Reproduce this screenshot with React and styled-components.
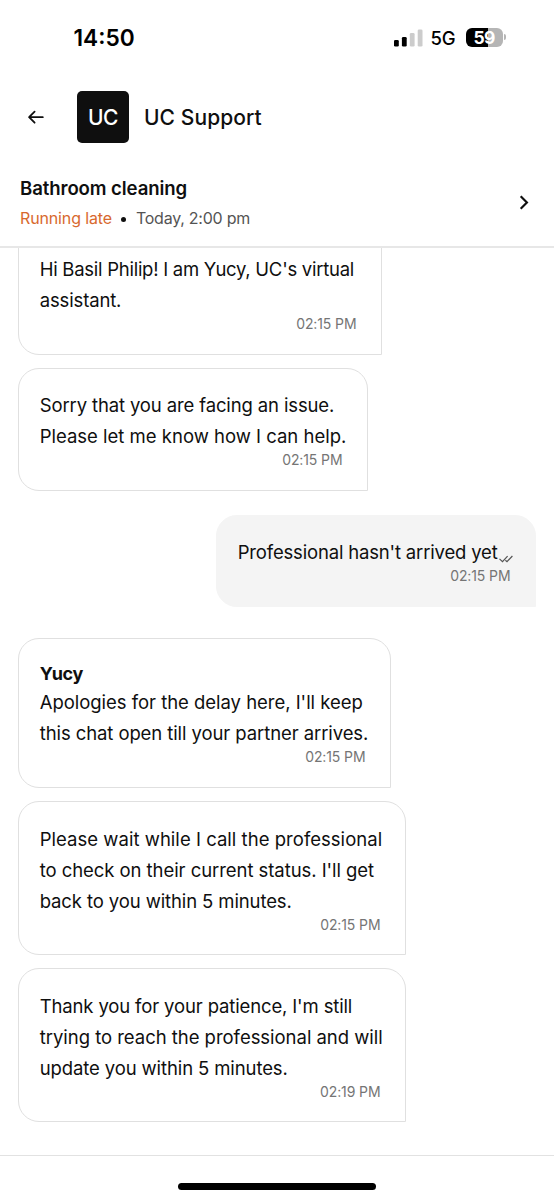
import React from 'react';
import styled, { createGlobalStyle } from 'styled-components';

const GlobalStyle = createGlobalStyle`
  *, *::before, *::after { box-sizing: border-box; }
  body { margin: 0; background: #fff; }
`;

const Screen = styled.main`
  width: 554px;
  height: 1200px;
  display: flex;
  flex-direction: column;
  overflow: hidden;
  background: #fff;
  color: #0f0f0f;
  font-family: Inter, 'Liberation Sans', sans-serif;
  white-space: nowrap;
`;

const StatusBar = styled.div`
  height: 76px;
  flex: none;
  display: flex;
  align-items: center;
  justify-content: space-between;
  padding: 0 51.5px 0 73.5px;
  color: #000;
`;

const Clock = styled.span`
  font-size: 22.7px;
  font-weight: 600;
  line-height: 28px;
`;

const StatusIcons = styled.div`
  display: flex;
  align-items: center;
`;

const Network = styled.span`
  width: 35px;
  margin-left: 8px;
  font-size: 18.5px;
  font-weight: 450;
  line-height: 24px;
  letter-spacing: -0.2px;
`;

const Battery = styled.div`
  position: relative;
  width: 37px;
  height: 19px;
  margin-bottom: 2px;
  border-radius: 6px;
  background: linear-gradient(90deg, #000 59%, #b5b5b5 59%);
  color: #fff;
  font-size: 17.5px;
  font-weight: 700;
  line-height: 20px;
  text-align: center;
  letter-spacing: -0.8px;

  &::after {
    content: '';
    position: absolute;
    right: -3px;
    top: 6.5px;
    width: 2px;
    height: 6px;
    border-radius: 0 2px 2px 0;
    background: #b5b5b5;
  }
`;

const TitleBar = styled.header`
  height: 82px;
  flex: none;
  display: flex;
  align-items: center;
  padding: 0 20px 0 27px;
`;

const BackIcon = styled.svg`
  width: 18px;
  height: 16px;
  flex: none;
`;

const Logo = styled.div`
  width: 52px;
  height: 52px;
  margin: 0 15px 0 32px;
  display: grid;
  place-items: center;
  border-radius: 5px;
  background: #0f0f0f;
  color: #fff;
  font-size: 21px;
  font-weight: 500;
  letter-spacing: -0.5px;
`;

const Title = styled.h1`
  margin: 0;
  font-size: 21px;
  font-weight: 500;
  letter-spacing: 0.08px;
`;

const Booking = styled.section`
  height: 90px;
  flex: none;
  display: flex;
  align-items: flex-start;
  justify-content: space-between;
  padding: 15.5px 25px 0 20px;
  border-bottom: 2px solid #e7e7e7;
`;

const Service = styled.h2`
  margin: 0 0 4px;
  font-size: 18.6px;
  font-weight: 600;
  line-height: 28px;
  letter-spacing: -0.1px;
`;

const Details = styled.div`
  display: flex;
  align-items: center;
  font-size: 16px;
  line-height: 25px;
  letter-spacing: -0.14px;
  color: #545454;
`;

const Late = styled.span`
  color: #d8692e;
`;

const Today = styled.span`
  letter-spacing: -0.24px;
`;

const Dot = styled.i`
  width: 5px;
  height: 5px;
  margin: 3px 10px 0 9px;
  border-radius: 50%;
  background: #0f0f0f;
`;

const Chevron = styled.svg`
  width: 10px;
  height: 15px;
  margin-top: 21px;
`;

const Chat = styled.div`
  flex: 1;
  min-height: 0;
  overflow: hidden;
  display: flex;
  flex-direction: column;
  justify-content: flex-end;
  padding: 0 18px 33px;
  border-bottom: 1px solid #e2e2e2;
`;

const Bubble = styled.article`
  flex: none;
  width: ${(p) => p.$width}px;
  align-self: ${(p) => (p.$own ? 'flex-end' : 'flex-start')};
  margin-top: ${(p) => p.$gap}px;
  padding: ${(p) => p.$top}px 24.5px 21.5px 20.7px;
  border: 1px solid ${(p) => (p.$own ? '#f4f4f4' : '#e0e0e0')};
  border-radius: 21px 21px 0 21px;
  background: ${(p) => (p.$own ? '#f4f4f4' : '#fff')};
`;

const Sender = styled.div`
  font-size: 18px;
  font-weight: 700;
  line-height: 27px;
  letter-spacing: -0.4px;
`;

const Line = styled.div`
  height: 31px;
  font-size: 18.5px;
  line-height: 31px;
  letter-spacing: ${(p) => p.$track}px;
`;

const Time = styled.time`
  display: block;
  font-size: 14px;
  line-height: 16px;
  letter-spacing: -0.1px;
  text-align: right;
  color: #757575;
`;

const Ticks = styled.svg`
  width: 14px;
  height: 8px;
  margin-left: 1px;
  vertical-align: -4px;
`;

const HomeArea = styled.footer`
  height: 44px;
  flex: none;
  display: flex;
  justify-content: center;
  align-items: flex-start;
  padding-top: 27px;
`;

const HomeIndicator = styled.div`
  width: 198px;
  height: 6.5px;
  border-radius: 3.5px;
  background: #000;
`;

const messages = [
  { width: 364, gap: 0, top: 60, time: '02:15 PM', lines: [["Hi Basil Philip! I am Yucy, UC's virtual", -0.26], ['assistant.', -0.14]] },
  { width: 350, gap: 13, top: 21.5, time: '02:15 PM', lines: [['Sorry that you are facing an issue.', -0.13], ['Please let me know how I can help.', 0]] },
  { width: 320, gap: 24, top: 21.5, time: '02:15 PM', own: true, lines: [["Professional hasn't arrived yet", -0.17]] },
  { width: 373, gap: 31.5, top: 21, time: '02:15 PM', sender: 'Yucy', lines: [["Apologies for the delay here, I'll keep", -0.03], ['this chat open till your partner arrives.', -0.09]] },
  { width: 388, gap: 13.5, top: 21.5, time: '02:15 PM', lines: [['Please wait while I call the professional', 0.03], ["to check on their current status. I'll get", -0.06], ['back to you within 5 minutes.', -0.11]] },
  { width: 388, gap: 13, top: 21.5, time: '02:19 PM', lines: [["Thank you for your patience, I'm still", -0.14], ['trying to reach the professional and will', -0.03], ['update you within 5 minutes.', -0.11]] },
];

const Signal = () => (
  <svg width="29" height="18" viewBox="0 0 29 18">
    <rect x="0" y="11" width="4.8" height="6.6" rx="1.3" fill="#000" />
    <rect x="7.9" y="8" width="4.8" height="9.6" rx="1.3" fill="#000" />
    <rect x="15.8" y="4" width="4.8" height="13.6" rx="1.3" fill="#ccc" />
    <rect x="23.7" y="0.4" width="4.8" height="17.2" rx="1.3" fill="#ccc" />
  </svg>
);

const ReadTicks = () => (
  <Ticks viewBox="0 0 14 8" fill="none" stroke="#545454" strokeWidth="1.2">
    <path d="M0.5 3.9 3.5 6.6 8.6 1.2M6.4 5.2 8 6.6 13.4 1" />
  </Ticks>
);

export default function App() {
  return (
    <Screen>
      <GlobalStyle />
      <StatusBar>
        <Clock>14:50</Clock>
        <StatusIcons>
          <Signal />
          <Network>5G</Network>
          <Battery>59</Battery>
        </StatusIcons>
      </StatusBar>
      <TitleBar>
        <BackIcon viewBox="0 0 18 16" fill="none" stroke="#0f0f0f" strokeWidth="1.8" strokeLinecap="round" strokeLinejoin="round">
          <path d="M15.8 8.2H2.2M7.6 2.7 2.1 8.2 7.6 13.7" />
        </BackIcon>
        <Logo>UC</Logo>
        <Title>UC Support</Title>
      </TitleBar>
      <Booking>
        <div>
          <Service>Bathroom cleaning</Service>
          <Details>
            <Late>Running late</Late>
            <Dot />
            <Today>Today, 2:00 pm</Today>
          </Details>
        </div>
        <Chevron viewBox="0 0 10 15" fill="none" stroke="#0f0f0f" strokeWidth="2.2">
          <path d="M1.7 1.3 7.9 7.5 1.7 13.7" />
        </Chevron>
      </Booking>
      <Chat>
        {messages.map((m, i) => (
          <Bubble key={i} $width={m.width} $gap={m.gap} $top={m.top} $own={m.own}>
            {m.sender && <Sender>{m.sender}</Sender>}
            {m.lines.map(([text, track]) => (
              <Line key={text} $track={track}>
                {text}
                {m.own && <ReadTicks />}
              </Line>
            ))}
            <Time>{m.time}</Time>
          </Bubble>
        ))}
      </Chat>
      <HomeArea>
        <HomeIndicator />
      </HomeArea>
    </Screen>
  );
}
